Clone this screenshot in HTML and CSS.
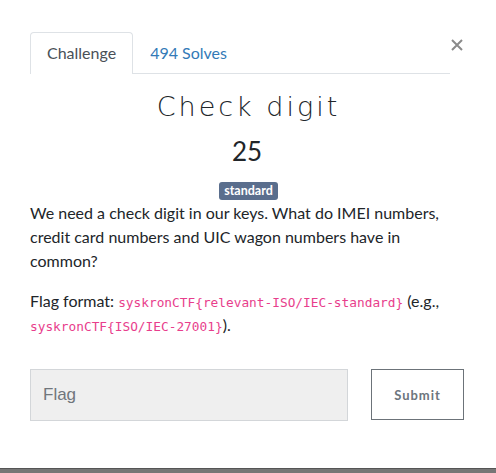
FILE: index.html
```html
<!DOCTYPE html>
<html>
<head>
<meta charset="utf-8">
<link rel="stylesheet" href="styles.css">
</head>
<body>
<div class="modal">
  <div class="header">
    <ul class="tabs">
      <li class="tab active">Challenge</li>
      <li class="tab link">494 Solves</li>
    </ul>
    <button class="close" aria-label="Close">
      <svg width="12" height="12" viewBox="0 0 12 12"><path d="M1 1L11 11M11 1L1 11" stroke="#8a8a8a" stroke-width="2" fill="none"/></svg>
    </button>
  </div>
  <div class="body">
    <h3 class="title">Check digit</h3>
    <h4 class="value">25</h4>
    <div class="tags"><span class="badge">standard</span></div>
    <div class="desc">
      <p>We need a check digit in our keys. What do IMEI numbers, credit card numbers and UIC wagon numbers have in common?</p>
      <p>Flag format: <code>syskronCTF{relevant-ISO/IEC-standard}</code> (e.g., <code>syskronCTF{ISO/IEC-27001}</code>).</p>
    </div>
    <form class="submit-row">
      <input class="flag" type="text" placeholder="Flag">
      <button class="submit" type="button">Submit</button>
    </form>
  </div>
</div>
<div class="bottom-bar"></div>
</body>
</html>
```
FILE: styles.css
```css
html, body {
  margin: 0;
  padding: 0;
  background: #fff;
}
body {
  font-family: Lato, "Noto Sans", sans-serif;
  color: #212529;
  font-size: 16px;
  line-height: 1.5;
  height: 473px;
  display: flex;
  flex-direction: column;
  overflow: hidden;
}
.modal {
  flex: 1;
  padding: 32px 0 0 30px;
}
.header {
  display: flex;
  align-items: flex-start;
}
.tabs {
  list-style: none;
  margin: 0;
  padding: 0;
  width: 420px;
  display: flex;
  border-bottom: 1px solid #dee2e6;
}
.tab {
  padding: 8px 16px;
  line-height: 24px;
  border: 1px solid transparent;
  border-bottom: 0;
  border-radius: 4px 4px 0 0;
  margin-bottom: -1px;
}
.tab.active {
  color: #495057;
  border-color: #dee2e6;
  background: #fff;
  padding-bottom: 9px;
}
.tab.link {
  color: #337ab7;
}
.close {
  border: 0;
  background: none;
  padding: 0;
  margin: 7px 0 0 1px;
  width: 12px;
  height: 12px;
  display: flex;
  cursor: pointer;
}
.body {
  width: 434px;
}
.title {
  margin: 17px 0 0;
  text-align: center;
  font-family: "DejaVu Sans", Lato, sans-serif;
  font-size: 27px;
  font-weight: 200;
  line-height: 32px;
  letter-spacing: 3px;
  padding-left: 3px;
  color: #212529;
}
.value {
  margin: 13px 0 0;
  text-align: center;
  font-size: 26px;
  font-weight: 400;
  line-height: 1.2;
  color: #212529;
}
.tags {
  margin-top: 15px;
  text-align: center;
  height: 18px;
  line-height: 0;
}
.badge {
  display: inline-block;
  background: #5a6e8d;
  color: #fff;
  font-size: 12.5px;
  font-weight: 700;
  line-height: 18px;
  height: 18px;
  padding: 0 5px;
  border-radius: 3px;
  margin-left: 3px;
}
.desc {
  margin-top: 1px;
}
.desc p {
  margin: 0 0 16px;
  width: 420px;
}
code {
  font-family: "DejaVu Sans Mono", monospace;
  font-size: 12.8px;
  color: #e83e8c;
}
.submit-row {
  margin-top: 32px;
  display: flex;
  gap: 23px;
}
.flag {
  box-sizing: border-box;
  width: 318px;
  height: 52px;
  background: #efefef;
  border: 1px solid #d3d6d9;
  padding: 0 12px;
  font-family: "Liberation Sans", Arial, sans-serif;
  font-size: 17px;
  color: #495057;
  outline: none;
}
.flag::placeholder {
  color: #70767c;
}
.submit {
  box-sizing: border-box;
  width: 93px;
  height: 51px;
  background: #fff;
  border: 1px solid #6c7379;
  font-family: Lato, sans-serif;
  font-size: 13px;
  font-weight: 700;
  letter-spacing: 1px;
  color: #6c757d;
  padding: 0;
}
.bottom-bar {
  height: 4px;
  background: #767676;
  border-top: 1px solid #555;
}
```
